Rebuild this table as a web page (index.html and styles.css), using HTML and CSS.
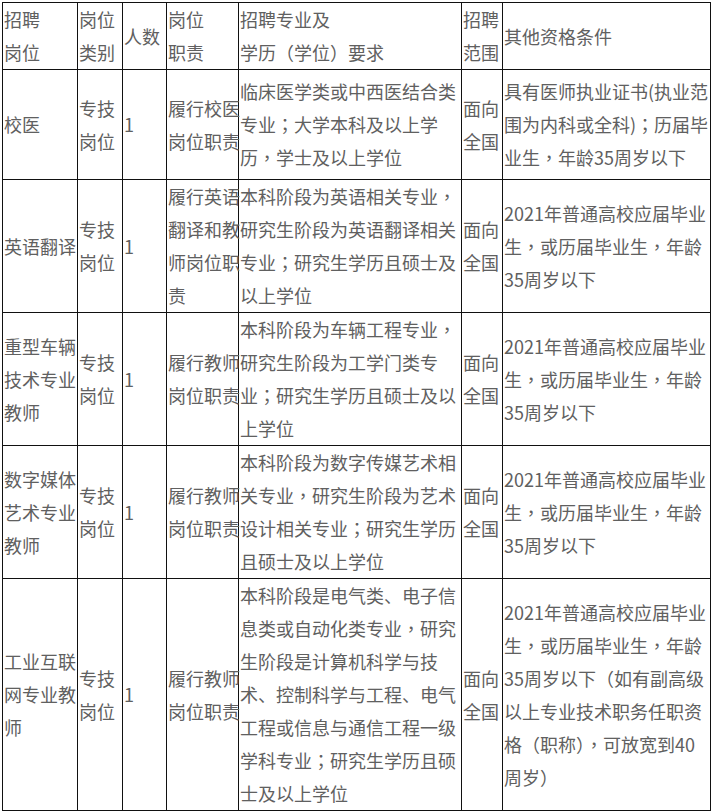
FILE: index.html
```html
<!DOCTYPE html>
<html lang="zh-CN">
<head>
<meta charset="utf-8">
<title>招聘岗位</title>
<link rel="stylesheet" href="styles.css">
</head>
<body>
<div class="wrap">
<table class="jobs">
<colgroup>
<col class="c1"><col class="c2"><col class="c3"><col class="c4"><col class="c5"><col class="c6"><col class="c7">
</colgroup>
<tbody>
<tr class="r-head">
<td>招聘<br>岗位</td><td>岗位<br>类别</td><td>人数</td><td>岗位<br>职责</td><td>招聘专业及<br>学历（学位）要求</td><td>招聘<br>范围</td><td>其他资格条件</td>
</tr>
<tr class="r1">
<td>校医</td><td>专技<br>岗位</td><td>1</td><td>履行校医<br>岗位职责</td><td>临床医学类或中西医结合类<br>专业<span class="p" lang="zh-TW">；</span>大学本科及以上学<br>历<span class="p" lang="zh-TW">，</span>学士及以上学位</td><td>面向<br>全国</td><td>具有医师执业证书(执业范<br>围为内科或全科)<span class="p" lang="zh-TW">；</span>历届毕<br>业生<span class="p" lang="zh-TW">，</span>年龄35周岁以下</td>
</tr>
<tr class="r2">
<td>英语翻译</td><td>专技<br>岗位</td><td>1</td><td>履行英语<br>翻译和教<br>师岗位职<br>责</td><td>本科阶段为英语相关专业<span class="p" lang="zh-TW">，</span><br>研究生阶段为英语翻译相关<br>专业<span class="p" lang="zh-TW">；</span>研究生学历且硕士及<br>以上学位</td><td>面向<br>全国</td><td>2021年普通高校应届毕业<br>生<span class="p" lang="zh-TW">，</span>或历届毕业生<span class="p" lang="zh-TW">，</span>年龄<br>35周岁以下</td>
</tr>
<tr class="r2">
<td>重型车辆<br>技术专业<br>教师</td><td>专技<br>岗位</td><td>1</td><td>履行教师<br>岗位职责</td><td>本科阶段为车辆工程专业<span class="p" lang="zh-TW">，</span><br>研究生阶段为工学门类专<br>业<span class="p" lang="zh-TW">；</span>研究生学历且硕士及以<br>上学位</td><td>面向<br>全国</td><td>2021年普通高校应届毕业<br>生<span class="p" lang="zh-TW">，</span>或历届毕业生<span class="p" lang="zh-TW">，</span>年龄<br>35周岁以下</td>
</tr>
<tr class="r2">
<td>数字媒体<br>艺术专业<br>教师</td><td>专技<br>岗位</td><td>1</td><td>履行教师<br>岗位职责</td><td>本科阶段为数字传媒艺术相<br>关专业<span class="p" lang="zh-TW">，</span>研究生阶段为艺术<br>设计相关专业<span class="p" lang="zh-TW">；</span>研究生学历<br>且硕士及以上学位</td><td>面向<br>全国</td><td>2021年普通高校应届毕业<br>生<span class="p" lang="zh-TW">，</span>或历届毕业生<span class="p" lang="zh-TW">，</span>年龄<br>35周岁以下</td>
</tr>
<tr class="r5">
<td>工业互联<br>网专业教<br>师</td><td>专技<br>岗位</td><td>1</td><td>履行教师<br>岗位职责</td><td>本科阶段是电气类、电子信<br>息类或自动化类专业<span class="p" lang="zh-TW">，</span>研究<br>生阶段是计算机科学与技<br>术、控制科学与工程、电气<br>工程或信息与通信工程一级<br>学科专业<span class="p" lang="zh-TW">；</span>研究生学历且硕<br>士及以上学位</td><td>面向<br>全国</td><td>2021年普通高校应届毕业<br>生<span class="p" lang="zh-TW">，</span>或历届毕业生<span class="p" lang="zh-TW">，</span>年龄<br>35周岁以下（如有副高级<br>以上专业技术职务任职资<br>格（职称）<span class="p" lang="zh-TW">，</span>可放宽到40<br>周岁）</td>
</tr>
</tbody>
</table>
</div>
</body>
</html>
```

FILE: styles.css
```css
html, body {
  margin: 0;
  padding: 0;
  background: #ffffff;
}

.wrap {
  padding: 2px 0 0 2px;
}

.jobs {
  border-collapse: collapse;
  table-layout: fixed;
  width: 708px;
  font-family: "Noto Sans CJK SC", "Noto Sans", sans-serif;
  font-size: 18px;
  line-height: 33px;
  color: #606060;
}

.jobs td {
  border: 1px solid #111;
  padding: 0 0 0 1px;
  vertical-align: middle;
  white-space: nowrap;
  overflow: visible;
}

.p {
  font-family: "Noto Sans CJK TC", "Noto Sans CJK SC", sans-serif;
}

.c1 { width: 75px; }
.c2 { width: 45px; }
.c3 { width: 44px; }
.c4 { width: 72px; }
.c5 { width: 223px; }
.c6 { width: 41px; }
.c7 { width: 208px; }

.r-head { height: 67px; }
.r1 { height: 110px; }
.r2 { height: 133px; }
.r5 { height: 232px; }
```
